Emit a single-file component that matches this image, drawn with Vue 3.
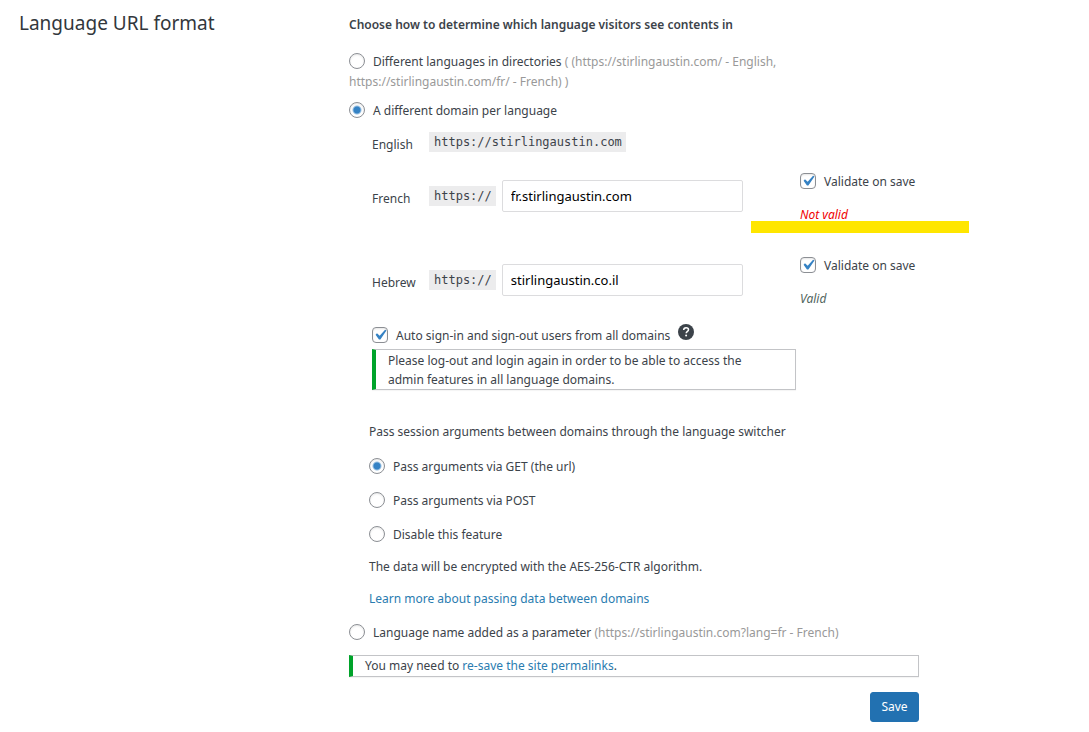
<script setup>
import { ref, reactive } from 'vue'

const format = ref('domain')
const passing = ref('get')
const autoSignIn = ref(true)

const domains = reactive([
  { code: 'fr', name: 'French', host: 'fr.stirlingaustin.com', validate: true, valid: false },
  { code: 'he', name: 'Hebrew', host: 'stirlingaustin.co.il', validate: true, valid: true },
])

const passingModes = [
  { value: 'get', label: 'Pass arguments via GET (the url)' },
  { value: 'post', label: 'Pass arguments via POST' },
  { value: 'off', label: 'Disable this feature' },
]
</script>

<template>
  <section class="settings">
    <header class="settings-header">
      <h2>Language URL format</h2>
    </header>

    <form class="settings-body" @submit.prevent>
      <h3>Choose how to determine which language visitors see contents in</h3>

      <label class="option">
        <input v-model="format" type="radio" name="format" value="directory" />Different languages in directories
        <span class="hint">( (<span class="url">https://stirlingaustin.com/</span> - English, <span class="url">https://stirlingaustin.com/fr/</span> - French) )</span>
      </label>

      <label class="option spaced">
        <input v-model="format" type="radio" name="format" value="domain" />A different domain per language
      </label>

      <div class="domain-settings">
        <div class="domain-row default-domain">
          <span class="domain-name">English</span>
          <code>https://stirlingaustin.com</code>
        </div>

        <div v-for="domain in domains" :key="domain.code" class="domain-row">
          <label class="domain-name" :for="`domain-${domain.code}`">{{ domain.name }}</label>
          <div class="domain-field">
            <code>https://</code>
            <input :id="`domain-${domain.code}`" v-model="domain.host" type="text" />
          </div>
          <div class="validation">
            <label><input v-model="domain.validate" type="checkbox" />Validate on save</label>
            <p class="status" :class="{ invalid: !domain.valid }">{{ domain.valid ? 'Valid' : 'Not valid' }}</p>
          </div>
        </div>

        <div class="sign-in">
          <label><input v-model="autoSignIn" type="checkbox" />Auto sign-in and sign-out users from all domains</label>
          <button class="help" type="button" aria-label="Help">
            <svg viewBox="0 0 16 16" width="16" height="16" aria-hidden="true">
              <circle cx="8" cy="8" r="8" fill="#3c434a" />
              <path d="M5.7 6.1C5.7 4.5 6.8 3.7 8.1 3.7s2.4.8 2.4 2.1c0 1.6-2.3 1.7-2.3 3.5" fill="none" stroke="#fff" stroke-width="1.5" />
              <circle cx="8.1" cy="11.6" r="1" fill="#fff" />
            </svg>
          </button>
        </div>
        <div class="notice login-notice">Please log-out and login again in order to be able to access the admin features in all language domains.</div>
      </div>

      <fieldset class="passing">
        <legend>Pass session arguments between domains through the language switcher</legend>
        <label v-for="mode in passingModes" :key="mode.value">
          <input v-model="passing" type="radio" name="passing" :value="mode.value" />{{ mode.label }}
        </label>
        <p>The data will be encrypted with the AES-256-CTR algorithm.</p>
        <p><a href="#">Learn more about passing data between domains</a></p>
      </fieldset>

      <label class="option parameter">
        <input v-model="format" type="radio" name="format" value="parameter" />Language name added as a parameter
        <span class="hint">(https://stirlingaustin.com?lang=fr - French)</span>
      </label>

      <div class="notice">You may need to <a href="#">re-save the site permalinks</a>.</div>

      <div class="actions">
        <button class="save" type="submit">Save</button>
      </div>
    </form>
  </section>
</template>

<style>
body {
  margin: 0;
  background: #fff;
}
</style>

<style scoped>
.settings {
  display: grid;
  grid-template-columns: 330px minmax(0, 570px);
  padding: 15px 19px 10px;
  color: #3c434a;
  font: 12px/20px "Noto Sans", sans-serif;
}

h2,
h3,
p {
  margin: 0;
}

h2 {
  font-size: 19px;
  font-weight: 400;
  line-height: 16px;
  color: #32373c;
}

h3 {
  margin-bottom: 17px;
  font-size: 12px;
  font-weight: 600;
}

a {
  color: #2a7cb0;
  text-decoration: none;
}

.option {
  display: block;
}

.spaced {
  margin-top: 9px;
}

.hint {
  color: #999;
}

.url {
  white-space: nowrap;
}

input[type="radio"],
input[type="checkbox"] {
  appearance: none;
  box-sizing: border-box;
  width: 16px;
  height: 16px;
  margin: 0 8px 0 0;
  border: 1px solid #8c8f94;
  background: #fff center no-repeat;
  box-shadow: inset 0 1px 2px rgba(0, 0, 0, 0.1);
  vertical-align: -3px;
}

input[type="radio"] {
  border-radius: 50%;
}

input[type="radio"]:checked {
  background-image: radial-gradient(circle, #3582c4 3px, transparent 5px);
}

input[type="checkbox"] {
  border-radius: 4px;
}

input[type="checkbox"]:checked {
  background-image: url("data:image/svg+xml,%3Csvg xmlns='http://www.w3.org/2000/svg' viewBox='0 0 20 20'%3E%3Cpath d='M14.83 4.89l1.34.94-5.81 8.38H9.02L5.78 9.67l1.34-1.25 2.57 2.4z' fill='%233582c4'/%3E%3C/svg%3E");
  background-size: 21px 21px;
}

.domain-settings {
  margin-left: 23px;
}

.domain-row {
  display: grid;
  grid-template-columns: 57px minmax(0, 314px) 1fr;
  min-height: 84px;
}

.domain-row .domain-name {
  padding-top: 17px;
}

.default-domain {
  box-sizing: border-box;
  min-height: 51px;
  padding-top: 11px;
  align-items: start;
  justify-items: start;
}

.default-domain .domain-name {
  padding-top: 3px;
}

code {
  padding: 0 4px 0 5px;
  background: #ececed;
  font: 12px/20px "DejaVu Sans Mono", monospace;
}

.domain-field {
  display: flex;
  align-items: center;
  align-self: start;
  gap: 6px;
  margin-top: 8px;
}

.domain-field input {
  flex: 1;
  box-sizing: border-box;
  min-width: 0;
  height: 32px;
  padding: 0 8px;
  border: 1px solid #dcdcde;
  border-radius: 2px;
  color: #000;
  font: 13px/20px "Noto Sans", sans-serif;
}

.validation {
  position: relative;
  padding-left: 57px;
}

.status {
  margin-top: 13px;
  color: #50645c;
  font-style: italic;
}

.invalid {
  color: #f00000;
}

/* Highlighter stroke lying over the row under a failed check */
.invalid::after {
  content: "";
  position: absolute;
  top: 49px;
  left: 8px;
  width: 218px;
  height: 12px;
  background: #ffe600;
}

.sign-in {
  display: flex;
  gap: 8px;
  margin-top: -14px;
}

.help {
  align-self: flex-start;
  width: 16px;
  height: 16px;
  margin-top: -2px;
  padding: 0;
  border: 0;
  background: none;
}

.help svg {
  display: block;
}

.notice {
  box-sizing: border-box;
  padding: 0 12px;
  border: 1px solid #c3c4c7;
  border-left: 4px solid #00a32a;
  box-shadow: 0 1px 1px rgba(0, 0, 0, 0.04);
}

.login-notice {
  max-width: 424px;
  margin-top: 3px;
  padding: 1px 32px 0 12px;
  line-height: 19px;
}

.passing {
  display: grid;
  gap: 14px;
  margin: 32px 0 0 20px;
  padding: 0;
  border: 0;
}

.passing legend {
  padding: 0;
  margin-bottom: 15px;
}

.passing p {
  margin-top: -2px;
}

.parameter {
  margin: 14px 0 12px;
}

.actions {
  display: flex;
  justify-content: flex-end;
  margin-top: 15px;
}

.save {
  min-width: 49px;
  height: 30px;
  padding: 0 10px;
  border: 1px solid #2271b1;
  border-radius: 3px;
  background: #2271b1;
  color: #fff;
  font: 12px/28px "Noto Sans", sans-serif;
}
</style>
